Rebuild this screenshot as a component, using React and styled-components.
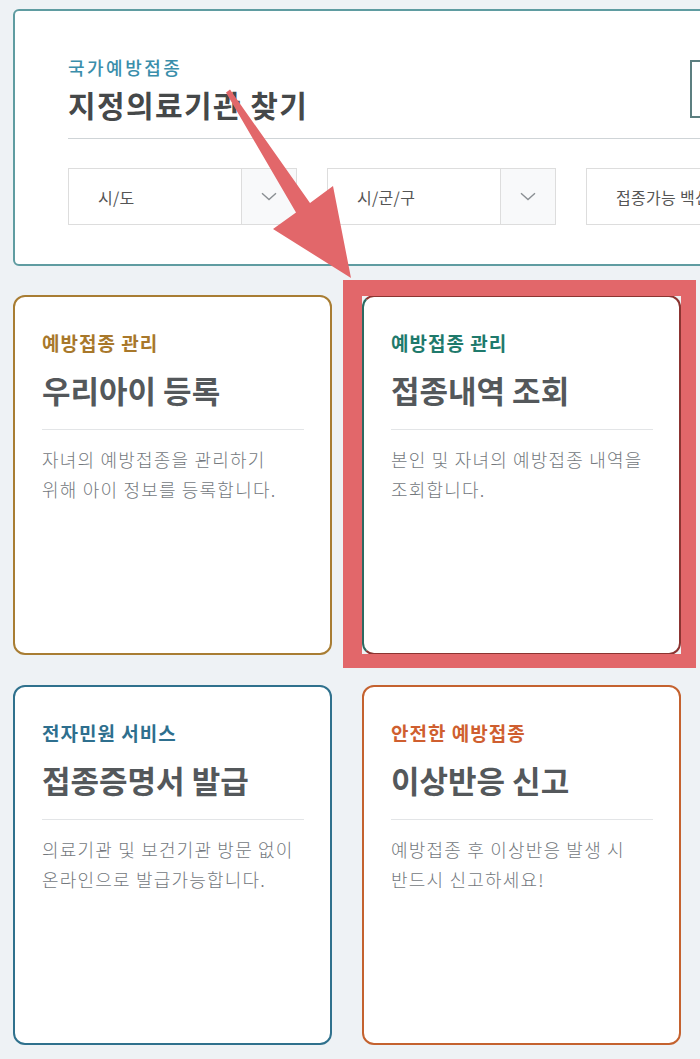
import React from "react";
import styled, { createGlobalStyle } from "styled-components";

const GlobalStyle = createGlobalStyle`
  html, body {
    margin: 0;
    padding: 0;
    background: #eef2f5;
    overflow: hidden;
  }
  body {
    font-family: "Noto Sans CJK KR", "Noto Sans", sans-serif;
  }
  * { box-sizing: border-box; }
`;

const Page = styled.div`
  position: relative;
  width: 700px;
  height: 1059px;
  overflow: hidden;
  padding: 9px 0 0 13px;
  background: #eef2f5;
`;

const SearchPanel = styled.section`
  width: 900px;
  height: 257px;
  background: #ffffff;
  border: 2px solid #5f9ca1;
  border-radius: 6px;
  padding: 45px 0 0 53px;
`;

const PanelHeader = styled.div`
  display: grid;
  grid-template-columns: 622px 60px;
  align-items: center;
`;

const PanelTitleBlock = styled.div`
  display: flex;
  flex-direction: column;
`;

const PanelLabel = styled.div`
  font-size: 18px;
  line-height: 22px;
  font-weight: 500;
  color: #3a8eab;
  letter-spacing: 2.5px;
  margin-bottom: 8px;
`;

const PanelTitle = styled.h1`
  margin: 0;
  font-size: 30px;
  line-height: 36px;
  font-weight: 700;
  color: #454849;
  letter-spacing: 1.4px;
`;

const SearchButton = styled.div`
  width: 60px;
  height: 58px;
  border: 2px solid #5c7f80;
  background: #fff;
`;

const PanelDivider = styled.div`
  height: 1px;
  background: #cfd4d7;
  margin: 16px 0 29px;
`;

const SelectRow = styled.div`
  display: flex;
  gap: 30px;
`;

const SelectBox = styled.div`
  display: flex;
  width: 229px;
  height: 57px;
  border: 1px solid #dddddd;
  background: #fff;
  flex-shrink: 0;
`;

const SelectText = styled.div`
  flex: 1;
  display: flex;
  align-items: center;
  padding-left: 29px;
  font-size: 16px;
  color: #555;
  letter-spacing: 0.3px;
  white-space: nowrap;
  overflow: hidden;
`;

const SelectToggle = styled.div`
  width: 55px;
  border-left: 1px solid #dddddd;
  background: #f8f9fa;
  display: flex;
  align-items: center;
  justify-content: center;
`;

const CardGrid = styled.div`
  display: grid;
  grid-template-columns: 319px 319px;
  column-gap: 30px;
  row-gap: 30px;
  margin-top: 29px;
`;

const Card = styled.article`
  position: relative;
  height: 360px;
  background: #ffffff;
  border: 2px solid ${(p) => p.$edge};
  ${(p) => (p.$leftEdge ? `border-left-color: ${p.$leftEdge};` : "")}
  border-radius: 12px;
  padding: 34px 26px 0 27px;
`;

const CardLabel = styled.div`
  font-size: 19px;
  line-height: 24px;
  font-weight: 700;
  letter-spacing: 1px;
  color: ${(p) => p.$color};
`;

const CardTitle = styled.h2`
  margin: 15px 0 0;
  font-size: 31px;
  line-height: 40px;
  font-weight: 700;
  color: #54585b;
  letter-spacing: 0;
`;

const CardDivider = styled.div`
  height: 1px;
  background: #e3e5e7;
  margin-top: 19px;
`;

const CardText = styled.p`
  margin: 14px 0 0;
  font-size: 18px;
  line-height: 30px;
  font-weight: 300;
  color: #73787d;
  letter-spacing: 1.2px;
`;

const HighlightFrame = styled.div`
  position: absolute;
  left: -21px;
  top: -17px;
  right: -17px;
  bottom: -15px;
  border-style: solid;
  border-color: #e2676a;
  border-width: 16px 15px 14px 19px;
  pointer-events: none;
`;

const ArrowLayer = styled.svg`
  position: absolute;
  left: 0;
  top: 0;
  width: 700px;
  height: 1059px;
  pointer-events: none;
`;

const Chevron = () => (
  <svg width="16" height="9" viewBox="0 0 16 9" fill="none">
    <path d="M1 1.2 L8 7.5 L15 1.2" stroke="#8a8f93" strokeWidth="1.4" />
  </svg>
);

const selects = ["시/도", "시/군/구", "접종가능 백신"];

const cards = [
  {
    label: "예방접종 관리",
    title: "우리아이 등록",
    lines: ["자녀의 예방접종을 관리하기", "위해 아이 정보를 등록합니다."],
    color: "#a8782b",
    edge: "#a87d33",
  },
  {
    label: "예방접종 관리",
    title: "접종내역 조회",
    lines: ["본인 및 자녀의 예방접종 내역을", "조회합니다."],
    color: "#1f7a6c",
    edge: "#8c3431",
    leftEdge: "#2c6a62",
    highlight: true,
  },
  {
    label: "전자민원 서비스",
    title: "접종증명서 발급",
    lines: ["의료기관 및 보건기관 방문 없이", "온라인으로 발급가능합니다."],
    color: "#2e6f8e",
    edge: "#2f718d",
  },
  {
    label: "안전한 예방접종",
    title: "이상반응 신고",
    lines: ["예방접종 후 이상반응 발생 시", "반드시 신고하세요!"],
    color: "#cf5f30",
    edge: "#c4622f",
  },
];

export default function App() {
  return (
    <>
      <GlobalStyle />
      <Page>
        <SearchPanel>
          <PanelHeader>
            <PanelTitleBlock>
              <PanelLabel>국가예방접종</PanelLabel>
              <PanelTitle>지정의료기관 찾기</PanelTitle>
            </PanelTitleBlock>
            <SearchButton />
          </PanelHeader>
          <PanelDivider />
          <SelectRow>
            {selects.map((s) => (
              <SelectBox key={s}>
                <SelectText>{s}</SelectText>
                <SelectToggle>
                  <Chevron />
                </SelectToggle>
              </SelectBox>
            ))}
          </SelectRow>
        </SearchPanel>

        <CardGrid>
          {cards.map((c, i) => (
            <Card key={i} $edge={c.edge} $leftEdge={c.leftEdge}>
              <CardLabel $color={c.color}>{c.label}</CardLabel>
              <CardTitle>{c.title}</CardTitle>
              <CardDivider />
              <CardText>
                {c.lines[0]}
                <br />
                {c.lines[1]}
              </CardText>
              {c.highlight && <HighlightFrame />}
            </Card>
          ))}
        </CardGrid>

        <ArrowLayer viewBox="0 0 700 1059">
          <polygon
            points="230,89.5 310,203 333,186 351,278 273,229 296,212.5 226,92.5"
            fill="#e2676a"
          />
        </ArrowLayer>
      </Page>
    </>
  );
}
